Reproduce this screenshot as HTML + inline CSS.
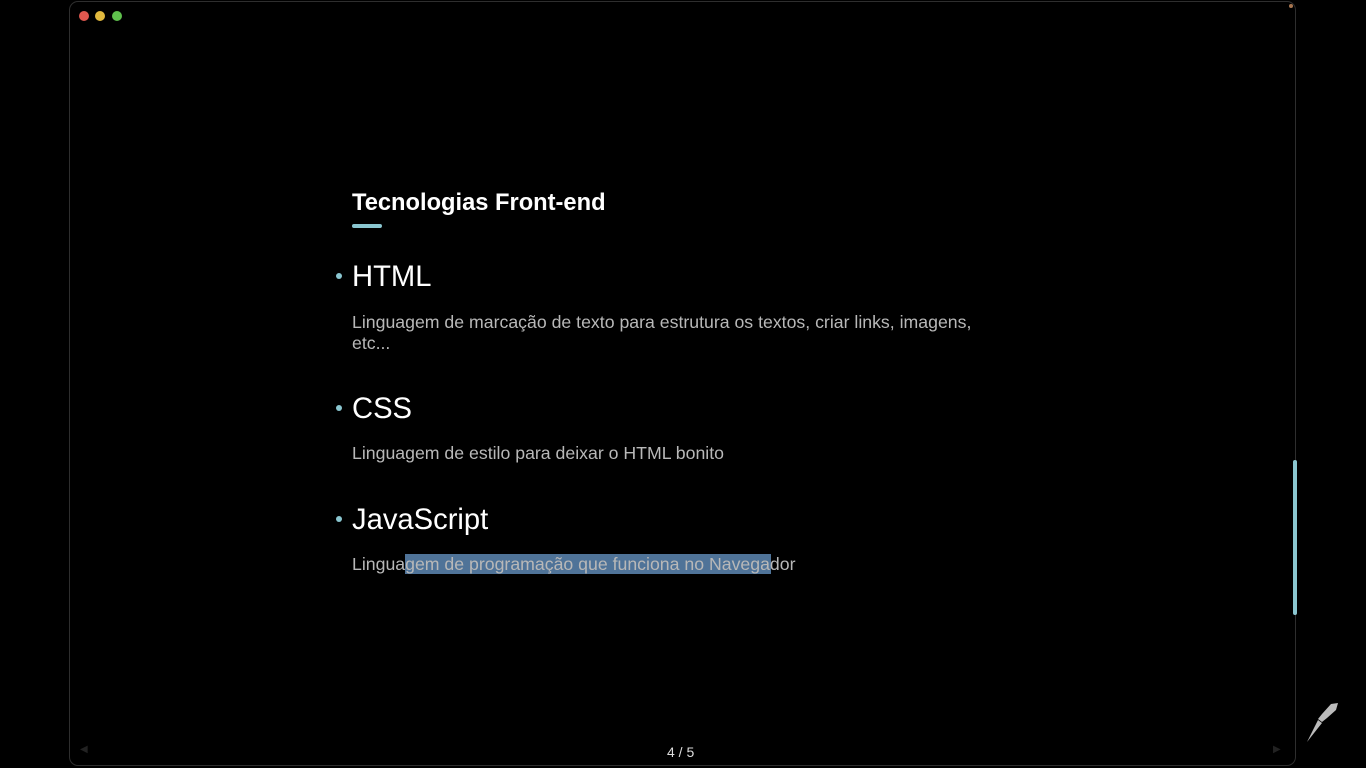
<!DOCTYPE html>
<html><head><style>
body{margin:0;width:1366px;height:768px;background:#000;overflow:hidden;font-family:"Liberation Sans",sans-serif;position:relative}
.win{position:absolute;left:69px;top:1px;width:1227px;height:765px;border:1px solid #2e2e2e;border-radius:9px;box-sizing:border-box}
.dot{position:absolute;top:11px;width:10px;height:10px;border-radius:50%}
.t{position:absolute;white-space:nowrap}
h1{position:absolute;left:352px;top:190px;margin:0;font-size:23.7px;font-weight:bold;color:#fff;white-space:nowrap}
.ul{position:absolute;left:352px;top:224px;width:30px;height:4px;border-radius:2px;background:#8ac6d0}
.h{position:absolute;left:352px;font-size:29.2px;color:#fff;white-space:nowrap}
.b{position:absolute;left:336px;width:6px;height:6px;border-radius:50%;background:#8ac6d0}
.d{position:absolute;left:352px;font-size:17.7px;color:#b8b8b8;line-height:21px;white-space:nowrap}
</style></head><body>
<div class="win"></div>
<div class="dot" style="left:79px;background:#e0584f"></div>
<div class="dot" style="left:95px;background:#e2b93e"></div>
<div class="dot" style="left:112px;background:#5fc04d"></div>
<div style="position:absolute;left:1289px;top:4px;width:4px;height:4px;border-radius:50%;background:#a67550"></div>
<div style="position:absolute;left:1293px;top:460px;width:4px;height:155px;background:#8ac6d0;border-radius:2px"></div>
<h1>Tecnologias Front-end</h1>
<div class="ul"></div>
<div class="b" style="top:273px"></div>
<div class="h" style="top:261px">HTML</div>
<div class="d" style="top:312px">Linguagem de marcação de texto para estrutura os textos, criar links, imagens,<br>etc...</div>
<div class="b" style="top:405px"></div>
<div class="h" style="top:393px">CSS</div>
<div class="d" style="top:443px">Linguagem de estilo para deixar o HTML bonito</div>
<div class="b" style="top:516px"></div>
<div class="h" style="top:504px">JavaScript</div>
<div style="position:absolute;left:405px;top:554px;width:366px;height:20px;background:#4f7398"></div>
<div class="d" style="top:554px">Linguagem de programação que funciona no Navegador</div>
<div class="t" style="left:667px;top:744px;font-size:14px;color:#ddd">4 / 5</div>
<div class="t" style="left:80px;top:744px;font-size:10px;color:#222">◀</div>
<div class="t" style="left:1273px;top:744px;font-size:10px;color:#222">▶</div>
<svg style="position:absolute;left:1305px;top:702px" width="35" height="42" viewBox="0 0 35 42"><path d="M26 2 L33 1 L31 8 L22 16 L17 20 L13 17 L17 12 Z M13 18 L17 21 L13 26 L2 40 L10 24 Z" fill="#bbb"/></svg>
</body></html>
